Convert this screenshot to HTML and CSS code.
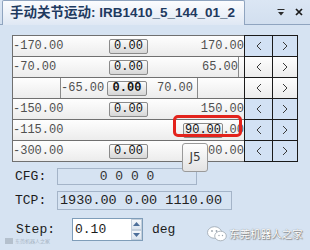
FILE: index.html
```html
<!DOCTYPE html>
<html>

<head>
  <title>手动关节运动</title>
  <meta charset="utf-8">
  <link rel="stylesheet" href="styles.css">
</head>

<body>
  <div class="tabbar">
    <div class="tab">手动关节运动: IRB1410_5_144_01_2</div>
    <div class="tab-tools">
      <svg class="pin" width="8" height="8" viewBox="0 0 8 8">
        <line x1="0.5" y1="0.5" x2="7.5" y2="0.5" stroke="#2b2b2b" />
        <polygon points="1,3 7,3 4,6.5" fill="#2b2b2b" />
      </svg>
      <svg class="close" width="8" height="8" viewBox="0 0 8 8">
        <path d="M1 1 L7 7 M7 1 L1 7" stroke="#1a1a1a" stroke-width="1.7" />
      </svg>
    </div>
  </div>

  <div class="panel">
    <div class="grid">
      <div class="row">
        <div class="slot">
          <div class="track"><span>-170.00</span><span>170.00</span></div>
          <div class="knob" style="left: 96px">0.00</div>
        </div>
        <div class="arrow"><svg width="6" height="10"><polyline points="5,1 1,5 5,9" /></svg></div>
        <div class="arrow next"><svg width="6" height="10"><polyline points="1,1 5,5 1,9" /></svg></div>
      </div>
      <div class="row">
        <div class="slot">
          <div class="track short"><span>-70.00</span><span>65.00</span></div>
          <div class="knob" style="left: 96px">0.00</div>
        </div>
        <div class="arrow plain"><svg width="6" height="10"><polyline points="5,1 1,5 5,9" /></svg></div>
        <div class="arrow next plain"><svg width="6" height="10"><polyline points="1,1 5,5 1,9" /></svg></div>
      </div>
      <div class="row">
        <div class="slot">
          <div class="track narrow"><span>-65.00</span><span>70.00</span></div>
          <div class="knob focus" style="left: 94px; width: 40px">0.00</div>
        </div>
        <div class="arrow plain"><svg width="6" height="10"><polyline points="5,1 1,5 5,9" /></svg></div>
        <div class="arrow next plain"><svg width="6" height="10"><polyline points="1,1 5,5 1,9" /></svg></div>
      </div>
      <div class="row">
        <div class="slot">
          <div class="track"><span>-150.00</span><span>150.00</span></div>
          <div class="knob" style="left: 96px">0.00</div>
        </div>
        <div class="arrow"><svg width="6" height="10"><polyline points="5,1 1,5 5,9" /></svg></div>
        <div class="arrow next"><svg width="6" height="10"><polyline points="1,1 5,5 1,9" /></svg></div>
      </div>
      <div class="row">
        <div class="slot">
          <div class="track"><span>-115.00</span><span>115.00</span></div>
          <div class="knob" style="left: 170px; width: 40px">90.00</div>
          <div class="mark"></div>
        </div>
        <div class="arrow"><svg width="6" height="10"><polyline points="5,1 1,5 5,9" /></svg></div>
        <div class="arrow next"><svg width="6" height="10"><polyline points="1,1 5,5 1,9" /></svg></div>
      </div>
      <div class="row">
        <div class="slot">
          <div class="track"><span>-300.00</span><span>300.00</span></div>
          <div class="knob" style="left: 96px">0.00</div>
        </div>
        <div class="arrow"><svg width="6" height="10"><polyline points="5,1 1,5 5,9" /></svg></div>
        <div class="arrow next"><svg width="6" height="10"><polyline points="1,1 5,5 1,9" /></svg></div>
      </div>
    </div>

    <div class="tip">J5</div>

    <div class="info">
      <div class="field">
        <span class="label">CFG:</span>
        <div class="box cfg">0 0 0 0</div>
      </div>
      <div class="field tcp-row">
        <span class="label">TCP:</span>
        <div class="box tcp">1930.00 0.00 1110.00</div>
      </div>
      <div class="field step-row">
        <span class="label step">Step:</span>
        <div class="spin">
          <span class="spin-val">0.10</span>
          <div class="spin-btns">
            <div class="spin-btn"><svg width="7" height="4"><polygon points="0,4 7,4 3.5,0" /></svg></div>
            <div class="spin-btn"><svg width="7" height="4"><polygon points="0,0 7,0 3.5,4" /></svg></div>
          </div>
        </div>
        <span class="unit">deg</span>
      </div>
    </div>
  </div>

  <div class="wm-left"><span class="wm-icon"></span>东莞机器人之家</div>
  <div class="wm-right">
    <svg width="20" height="16" viewBox="0 0 20 16">
      <ellipse cx="7.5" cy="6.5" rx="7" ry="5.8" fill="#fff" stroke="#9aa4ae" stroke-width="0.8" />
      <ellipse cx="13.5" cy="10" rx="5.8" ry="4.8" fill="#fff" stroke="#9aa4ae" stroke-width="0.8" />
      <circle cx="5" cy="5" r="0.9" fill="#9aa4ae" />
      <circle cx="9.5" cy="5" r="0.9" fill="#9aa4ae" />
      <circle cx="12" cy="9.5" r="0.7" fill="#9aa4ae" />
      <circle cx="15.5" cy="9.5" r="0.7" fill="#9aa4ae" />
    </svg>
    <span>东莞机器人之家</span>
  </div>
</body>

</html>
```

FILE: styles.css
```css
* {
  box-sizing: border-box;
}

body {
  margin: 0;
  width: 310px;
  height: 250px;
  overflow: hidden;
  position: relative;
  background-color: #d6e3f2;
  font-family: "Liberation Mono", monospace;
}

.tabbar {
  display: flex;
  height: 25px;
  border-bottom: 1px solid #8fa4bf;
  background: linear-gradient(#dbe6f4, #d2dfef);
}

.tab {
  margin-left: 2px;
  width: 243px;
  height: 25px;
  flex-shrink: 0;
  border: 1px solid #8fa4bf;
  border-bottom: none;
  border-radius: 2px 2px 0 0;
  background: linear-gradient(#fbfcfe, #dfe8f4);
  padding-left: 7px;
  font: bold 13.5px/23px "Liberation Sans", "Noto Sans CJK SC", sans-serif;
  color: #1e3a5f;
  white-space: nowrap;
  overflow: hidden;
}

.tab-tools {
  margin-left: auto;
  display: flex;
  align-items: center;
  gap: 10px;
  padding-right: 7px;
}

.pin {
  margin-top: 1px;
}

.panel {
  position: relative;
  padding: 10px 0 0 12px;
}

.grid {
  width: 286px;
}

.row {
  display: flex;
  height: 21px;
}

.row:first-child {
  height: 22px;
}

.slot {
  position: relative;
  width: 232px;
  border-left: 1px solid #707070;
  border-bottom: 1px solid #707070;
  background: linear-gradient(#fefefe, #ececec);
}

.row:first-child .slot {
  border-top: 1px solid #707070;
}

.track {
  display: flex;
  justify-content: space-between;
  height: 100%;
  font-size: 12px;
  line-height: 20px;
  color: #505050;
}

.track.short {
  width: 226px;
  border-right: 1px solid #8a8a8a;
}

.track.narrow {
  margin-left: 47px;
  width: 138px;
  border-left: 1px solid #8a8a8a;
  border-right: 1px solid #8a8a8a;
  padding-right: 4px;
}

.knob {
  position: absolute;
  top: 3px;
  width: 39px;
  height: 15px;
  border: 1px solid #8a8a8a;
  border-radius: 2px;
  background: linear-gradient(#fbfbfb, #d6d6d6);
  font-size: 12px;
  line-height: 13px;
  color: #111;
  text-align: center;
}

.knob.focus {
  font-weight: bold;
}

.mark {
  position: absolute;
  left: 160px;
  top: -5px;
  width: 69px;
  height: 22px;
  border: 3px solid #e3231c;
  border-radius: 5px;
  z-index: 2;
}

.arrow {
  width: 28px;
  border-left: 1px solid #1a1a1a;
  border-bottom: 1px solid #1a1a1a;
  background-color: #d2e1f4;
  display: flex;
  align-items: center;
  justify-content: center;
}

.arrow.next {
  width: 26px;
  border-right: 1px solid #1a1a1a;
}

.arrow.plain {
  background: linear-gradient(#fdfdfd, #ececec);
}

.row:first-child .arrow {
  border-top: 1px solid #1a1a1a;
}

.arrow polyline {
  fill: none;
  stroke: #3a3a3a;
  stroke-width: 1;
}

.tip {
  position: absolute;
  left: 182px;
  top: 118px;
  width: 26px;
  height: 29px;
  border: 1px solid #9a9a9a;
  border-radius: 3px;
  background: linear-gradient(#fefefe, #e3e3e3);
  font: 12px/27px "DejaVu Sans", sans-serif;
  color: #3a3a3a;
  text-align: center;
  z-index: 3;
}

.info {
  margin-top: 6px;
  padding-left: 3px;
  display: flex;
  flex-direction: column;
  font-size: 13px;
  color: #1b1b1b;
}

.field {
  display: flex;
  align-items: center;
}

.label {
  width: 42px;
}

.label.step {
  width: 57px;
  padding-left: 1px;
}

.box {
  border: 1px solid #a4b4c8;
  white-space: nowrap;
}

.cfg {
  width: 140px;
  height: 17px;
  line-height: 15px;
  text-align: center;
  color: #333;
}

.tcp-row {
  margin-top: 6px;
}

.tcp {
  width: 175px;
  height: 19px;
  line-height: 17px;
  padding-left: 2px;
  font-size: 13.5px;
  color: #222;
}

.step-row {
  margin-top: 8px;
}

.spin {
  display: flex;
  width: 71px;
  height: 23px;
  border: 1px solid #7f9db9;
  background-color: #fff;
}

.spin-val {
  flex: 1;
  padding-left: 2px;
  line-height: 21px;
}

.spin-btns {
  width: 11px;
  display: flex;
  flex-direction: column;
}

.spin-btn {
  flex: 1;
  border: 1px solid #c3cfdc;
  background: linear-gradient(#f4f7fb, #dce5ef);
  display: flex;
  align-items: center;
  justify-content: center;
}

.spin-btn polygon {
  fill: #4d6f9a;
}

.unit {
  margin-left: 9px;
}

.wm-left {
  position: absolute;
  left: 5px;
  top: 237px;
  display: flex;
  align-items: center;
  gap: 2px;
  font: 5px/7px "Noto Sans CJK SC", sans-serif;
  color: #a8b5c4;
}

.wm-icon {
  width: 8px;
  height: 6px;
  background-color: #b4c0cd;
}

.wm-right {
  position: absolute;
  left: 207px;
  top: 226px;
  display: flex;
  align-items: center;
  gap: 2px;
  font: 10.5px/16px "Noto Sans CJK SC", sans-serif;
  color: #fff;
  text-shadow: 0 0 1px #6a6a6a, 1px 1px 1px #8a8a8a;
}
```
